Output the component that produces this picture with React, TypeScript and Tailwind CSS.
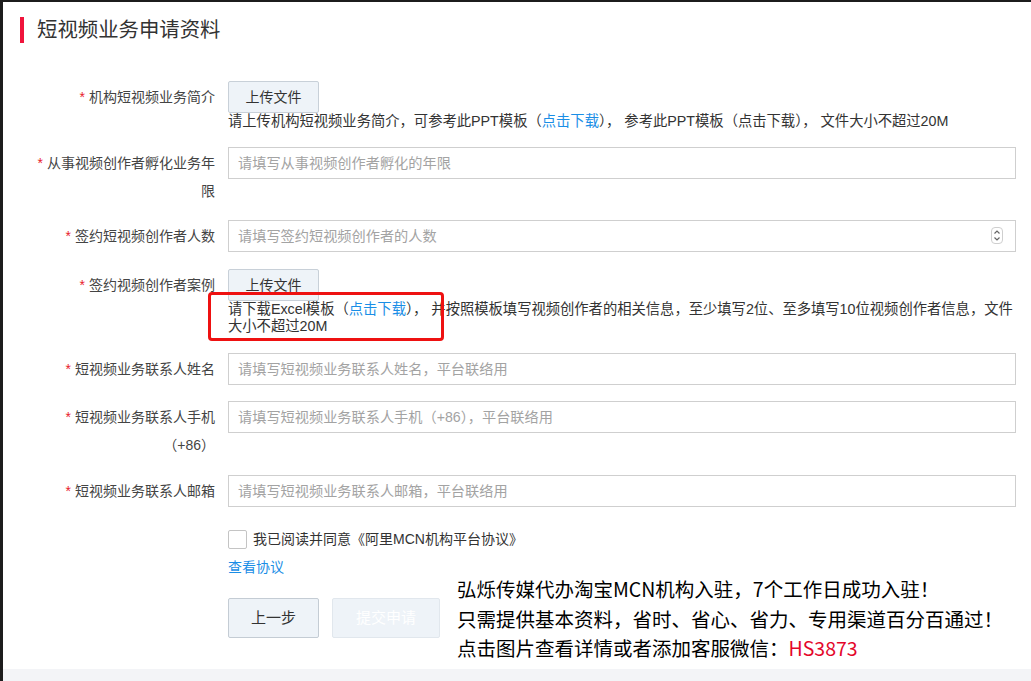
const font = "font-['Liberation_Sans','Noto_Sans_CJK_SC',sans-serif]";

function Label({ lines }: { lines: string[] }) {
  return (
    <div className="w-[212px] shrink-0 pt-[2px] text-right text-[14px] leading-[28px] text-[#444]">
      {lines.map((line, i) => (
        <div key={i}>
          {i === 0 && <span className="mr-[4px] text-[#e8202c]">*</span>}
          {line}
        </div>
      ))}
    </div>
  );
}

function TextInput({ placeholder, spinner }: { placeholder: string; spinner?: boolean }) {
  return (
    <div className="relative h-[32px] w-[788px] border border-[#cfcfcf] bg-white">
      <input
        className="h-full w-full px-[9px] text-[14.2px] text-[#333] outline-none placeholder:text-[#a3a3a3]"
        placeholder={placeholder}
      />
      {spinner && (
        <span className="absolute right-[12px] top-[6px] flex h-[17px] w-[12px] items-center justify-center rounded-[4px] border border-[#cfcfcf] bg-white">
          <svg width="8" height="13" viewBox="0 0 8 13" fill="none" stroke="#666" strokeWidth="1.2">
            <path d="M1.5 4.5 L4 2 L6.5 4.5" />
            <path d="M1.5 8.5 L4 11 L6.5 8.5" />
          </svg>
        </span>
      )}
    </div>
  );
}

function UploadButton() {
  return (
    <button className="h-[32px] w-[91px] rounded-[2px] border border-[#c8d0d8] bg-[#eef3f8] text-[14px] text-[#333]">
      上传文件
    </button>
  );
}

const link = "text-[#1a8ee6]";
const help = "text-[14.3px] leading-[17px] text-[#333] whitespace-nowrap";

export default function App() {
  return (
    <div className={`relative h-[681px] w-[1031px] overflow-hidden bg-white ${font}`}>
      <div className="h-[2px] bg-[#1c1c1c]" />
      <div className="flex h-[679px]">
        <div className="w-[3px] shrink-0 bg-[#1c1c1c]" />
        <div className="flex flex-1 flex-col">
          {/* header */}
          <div className="mt-[15px] flex h-[26px] items-center">
            <span className="ml-[17px] h-[26px] w-[4px] bg-[#f0143c]" />
            <h1 className="ml-[13px] text-[20.4px] leading-[26px] text-[#333]">短视频业务申请资料</h1>
          </div>

          <div className="mt-[38px] flex flex-col">
            <div className="flex gap-[13px]">
              <Label lines={["机构短视频业务简介"]} />
              <div className="flex flex-col items-start">
                <UploadButton />
                <p className={help}>
                  请上传机构短视频业务简介，可参考此PPT模板（<span className={link}>点击下载</span>）， 参考此PPT模板（点击下载）， 文件大小不超过20M
                </p>
              </div>
            </div>

            <div className="mt-[17px] flex gap-[13px]">
              <Label lines={["从事视频创作者孵化业务年", "限"]} />
              <TextInput placeholder="请填写从事视频创作者孵化的年限" />
            </div>

            <div className="mt-[15px] flex gap-[13px]">
              <Label lines={["签约短视频创作者人数"]} />
              <TextInput placeholder="请填写签约短视频创作者的人数" spinner />
            </div>

            <div className="mt-[17px] flex gap-[13px]">
              <Label lines={["签约视频创作者案例"]} />
              <div className="flex flex-col items-start">
                <UploadButton />
                <p className={help}>
                  请下载Excel模板（<span className={link}>点击下载</span>）， 并按照模板填写视频创作者的相关信息，至少填写2位、至多填写10位视频创作者信息，文件
                  <br />
                  大小不超过20M
                </p>
              </div>
            </div>

            <div className="mt-[18px] flex gap-[13px]">
              <Label lines={["短视频业务联系人姓名"]} />
              <TextInput placeholder="请填写短视频业务联系人姓名，平台联络用" />
            </div>

            <div className="mt-[16px] flex gap-[13px]">
              <Label lines={["短视频业务联系人手机", "（+86）"]} />
              <TextInput placeholder="请填写短视频业务联系人手机（+86），平台联络用" />
            </div>

            <div className="mt-[16px] flex gap-[13px]">
              <Label lines={["短视频业务联系人邮箱"]} />
              <TextInput placeholder="请填写短视频业务联系人邮箱，平台联络用" />
            </div>

            <div className="ml-[225px] mt-[23px] flex items-center">
              <span className="h-[19px] w-[19px] rounded-[2px] border border-[#c4c4c4] bg-white" />
              <span className="ml-[6px] text-[14px] leading-[19px] text-[#333]">我已阅读并同意《阿里MCN机构平台协议》</span>
            </div>

            <a className={`ml-[225px] mt-[8px] text-[14px] leading-[20px] ${link}`}>查看协议</a>

            <div className="ml-[225px] mt-[21px] flex gap-[13px]">
              <button className="h-[40px] w-[91px] rounded-[2px] border border-[#c4ccd4] bg-[#eef3f8] text-[15px] text-[#333]">
                上一步
              </button>
              <button className="h-[40px] w-[108px] rounded-[2px] border border-[#e1e7ed] bg-[#eef3f8] text-[15px] text-white">
                提交申请
              </button>
            </div>
          </div>

          <div className="mt-auto h-[12px] bg-[#f3f4f7]" />
        </div>
      </div>

      {/* highlight box */}
      <div className="absolute left-[208px] top-[292px] h-[49px] w-[236px] rounded-[4px] border-[3px] border-[#ee1111]" />

      {/* watermark overlay */}
      <div className="absolute left-[457px] top-[574px] text-[19.5px] leading-[29.5px] text-[#000] font-['Noto_Sans_CJK_SC',sans-serif]">
        <p>弘烁传媒代办淘宝MCN机构入驻，7个工作日成功入驻！</p>
        <p>只需提供基本资料，省时、省心、省力、专用渠道百分百通过！</p>
        <p>
          点击图片查看详情或者添加客服微信：<span className="text-[#e4062a]">HS3873</span>
        </p>
      </div>
    </div>
  );
}
